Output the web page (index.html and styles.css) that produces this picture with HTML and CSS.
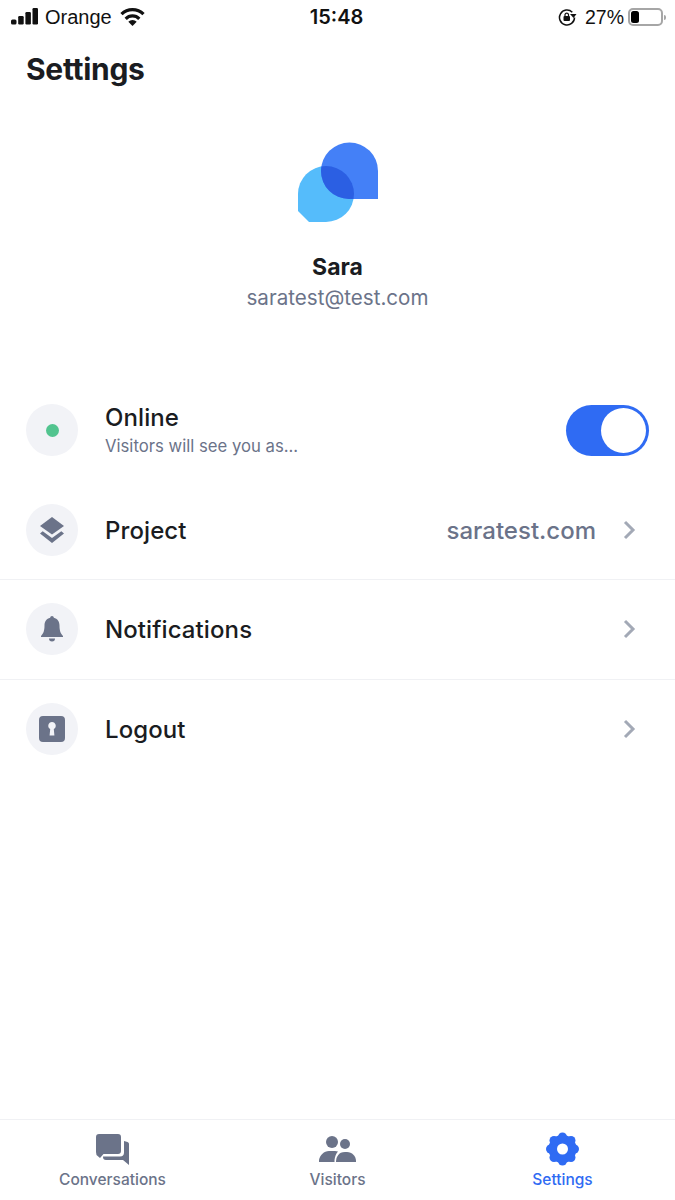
FILE: index.html
```html
<!DOCTYPE html>
<html lang="en">
<head>
<meta charset="utf-8">
<title>Settings</title>
<link rel="stylesheet" href="styles.css">
</head>
<body>
<div class="app">
  <header class="status">
    <div class="status-left">
      <svg class="signal" width="27" height="18" viewBox="0 0 27 18"><rect x="0" y="11.500" width="5.500" height="5" rx="1.500"/><rect x="7.200" y="8" width="5.500" height="8.500" rx="1.200"/><rect x="14.400" y="4" width="5.500" height="12.500" rx="1.200"/><rect x="21.500" y="0" width="5.500" height="16.500" rx="1.200"/></svg>
      <span class="carrier">Orange</span>
      <svg class="wifi" width="25" height="18" viewBox="0 0 25 18"><path d="M1.500 6.200A15.500 15.500 0 0 1 23.500 6.200" fill="none" stroke="#111" stroke-width="3.200"/><path d="M5.700 10.800A9.500 9.500 0 0 1 19.300 10.800" fill="none" stroke="#111" stroke-width="3.200"/><path d="M12.500 18L8.300 13.800A6 6 0 0 1 16.700 13.800z"/></svg>
    </div>
    <span class="clock">15:48</span>
    <div class="status-right">
      <svg class="lock" width="19" height="18" viewBox="0 0 19 18"><path d="M16.500 9.500a7.500 7.500 0 1 1-2.200-5.300" fill="none" stroke="#111" stroke-width="1.500"/><path d="M12 6h6.500L15.500 10z"/><rect x="5.500" y="8" width="6.500" height="5" rx="1"/><path d="M7 8V6.500a1.800 1.800 0 0 1 3.500 0V8" fill="none" stroke="#111" stroke-width="1.200"/></svg>
      <span class="pct">27%</span>
      <div class="battery"><div class="battery-fill"></div></div>
      <div class="battery-tip"></div>
    </div>
  </header>

  <h1 class="title">Settings</h1>

  <section class="profile">
    <svg class="logo" width="82" height="82" viewBox="0 0 82 82">
      <defs><clipPath id="logo-back"><path d="M2 52a28 28 0 0 1 56 0a28 28 0 0 1-28 28H13L2 69z"/></clipPath></defs>
      <path d="M2 52a28 28 0 0 1 56 0a28 28 0 0 1-28 28H13L2 69z" fill="#55bcfb"/>
      <path d="M25 29a28.500 28.500 0 0 1 57 0v28H53a28 28 0 0 1-28-28z" fill="#4480f7"/>
      <path clip-path="url(#logo-back)" d="M25 29a28.500 28.500 0 0 1 57 0v28H53a28 28 0 0 1-28-28z" fill="#2b5fe3"/>
    </svg>
    <div class="name">Sara</div>
    <div class="email">saratest@test.com</div>
  </section>

  <main class="menu">
    <div class="row row-online">
      <div class="badge"><span class="dot"></span></div>
      <div class="row-text">
        <div class="row-label">Online</div>
        <div class="row-sub">Visitors will see you as...</div>
      </div>
      <div class="toggle"><div class="knob"></div></div>
    </div>
    <div class="row row-line">
      <div class="badge">
        <svg width="24" height="26" viewBox="0 0 24 26"><path d="M12 0l12 9-12 8.500L0 9z"/><path d="M2.700 14.200L0 16.500 12 26l12-9.500-2.700-2.300L12 21z"/></svg>
      </div>
      <div class="row-label grow">Project</div>
      <div class="row-value">saratest.com</div>
      <svg class="chev" width="14" height="20" viewBox="0 0 14 20"><path d="M2 2l8 8-8 8" fill="none" stroke="#a3a9b6" stroke-width="3"/></svg>
    </div>
    <div class="row row-line row-lift">
      <div class="badge">
        <svg width="22" height="26" viewBox="1 1 22 26"><path d="M12 1c1 0 1.700.7 1.800 1.800C17.500 3.600 19.500 6.500 19.500 10.500c0 5.500 1.200 8 3.500 10.500v1H1v-1c2.300-2.500 3.500-5 3.500-10.500 0-4 2-6.900 5.700-7.700C10.300 1.700 11 1 12 1z"/><path d="M9 23.500h6a3 3 0 0 1-6 0z"/></svg>
      </div>
      <div class="row-label grow">Notifications</div>
      <svg class="chev" width="14" height="20" viewBox="0 0 14 20"><path d="M2 2l8 8-8 8" fill="none" stroke="#a3a9b6" stroke-width="3"/></svg>
    </div>
    <div class="row row-lift">
      <div class="badge">
        <svg width="26" height="26" viewBox="0 0 26 26"><path fill-rule="evenodd" d="M4 0h18a4 4 0 0 1 4 4v18a4 4 0 0 1-4 4H4a4 4 0 0 1-4-4V4a4 4 0 0 1 4-4zM13 6a3.800 3.800 0 0 0-1.800 7.100L10.600 19.500h4.800l-.6-6.400A3.800 3.800 0 0 0 13 6z"/></svg>
      </div>
      <div class="row-label grow">Logout</div>
      <svg class="chev" width="14" height="20" viewBox="0 0 14 20"><path d="M2 2l8 8-8 8" fill="none" stroke="#a3a9b6" stroke-width="3"/></svg>
    </div>
  </main>

  <nav class="tabs">
    <div class="tab">
      <svg width="33" height="34" viewBox="0 -2 33 34"><path d="M3 0H22a3 3 0 0 1 3 3v14a3 3 0 0 1-3 3H7.500L4 24 .5 21 0 18V3a3 3 0 0 1 3-3z"/><path d="M28 7l3.500 1a2 2 0 0 1 1.500 2V31l-6-5H10a3 3 0 0 1-3-3v-.5H24a4 4 0 0 0 4-4z"/></svg>
      <span>Conversations</span>
    </div>
    <div class="tab">
      <svg width="37" height="34" viewBox="0 -4 37 34"><circle cx="13" cy="6" r="6"/><circle cx="26" cy="8" r="5"/><path d="M0 26v-2c1-5 5-9 10-9h6c1 0 2 .2 3 .5-2 2-3 5-3.500 8.500V26z"/><path d="M17 26c0-5 2.500-10 9-10h2c5 0 9 4 9 9v1z"/></svg>
      <span>Visitors</span>
    </div>
    <div class="tab tab-active">
      <svg width="33" height="34" viewBox="0 -.5 33 34"><circle cx="16.500" cy="16.500" r="14"/><circle cx="16.500" cy="4.500" r="4.500"/><circle cx="25" cy="8" r="4.500"/><circle cx="28.500" cy="16.500" r="4.500"/><circle cx="25" cy="25" r="4.500"/><circle cx="16.500" cy="28.500" r="4.500"/><circle cx="8" cy="25" r="4.500"/><circle cx="4.500" cy="16.500" r="4.500"/><circle cx="8" cy="8" r="4.500"/><circle class="gear-hole" cx="16.500" cy="16.500" r="5.500"/></svg>
      <span>Settings</span>
    </div>
  </nav>
</div>
</body>
</html>
```

FILE: styles.css
```css
* { box-sizing: border-box; }
html, body { margin: 0; padding: 0; background: #fff; }
body { font-family: Inter, "Liberation Sans", sans-serif; color: #1a1c21; }
.app { width: 675px; height: 1200px; display: flex; flex-direction: column; overflow: hidden; }

.status { height: 34px; flex: none; display: grid; grid-template-columns: 1fr auto 1fr; align-items: center; padding: 0 9px 0 11px; color: #111; }
.status-left { display: flex; align-items: center; gap: 7px; }
.status-left svg { fill: #111; }
.carrier { font: 400 20px "Liberation Sans", sans-serif; }
.wifi { margin-left: 1px; }
.clock { font: 600 20px Inter, sans-serif; padding-right: 4px; }
.status-right { display: flex; align-items: center; justify-content: flex-end; }
.lock { fill: #111; margin-right: 8px; }
.pct { font: 400 19.500px "Liberation Sans", sans-serif; margin-right: 4px; }
.battery { width: 35px; height: 18px; border: 2px solid #a6a6a6; border-radius: 5px; padding: 1px; }
.battery-fill { width: 8px; height: 100%; background: #000; border-radius: 2.500px; }
.battery-tip { width: 2px; height: 5px; background: #a6a6a6; border-radius: 0 2px 2px 0; margin-left: 1px; }

.title { margin: 15px 0 0; padding: 0 26px; font-size: 30px; line-height: 40px; font-weight: 700; height: 40px; letter-spacing: -.3px; color: #1a1c21; }

.profile { display: flex; flex-direction: column; align-items: center; padding-top: 53px; }
.logo { display: block; margin-right: 1px; }
.name { margin-top: 28px; font-size: 23px; line-height: 30px; font-weight: 700; }
.email { margin-top: 2px; font-size: 20.600px; line-height: 28px; color: #6b7389; }

.menu { flex: 1; padding-top: 71px; }
.row { display: flex; align-items: center; height: 100px; padding: 0 38px 0 26px; }
.row-online { height: 94px; padding-right: 26px; margin-bottom: 3px; }
.row-line { border-bottom: 1px solid #f0f1f4; }
.row-lift { padding-bottom: 2px; }
.badge { width: 52px; height: 52px; border-radius: 50%; background: #f2f3f7; display: flex; align-items: center; justify-content: center; flex: none; margin-right: 27px; }
.badge svg { fill: #6b7389; }
.dot { width: 13px; height: 13px; border-radius: 50%; background: #52c48f; }
.row-text { flex: 1; }
.row-label { padding-top: 2px; font-size: 24px; line-height: 30px; font-weight: 500; letter-spacing: .1px; color: #1a1c21; }
.grow { flex: 1; }
.row-sub { font-size: 16.700px; line-height: 26px; color: #6b7389; }
.row-value { padding-top: 2px; font-size: 24px; font-weight: 500; color: #6b7389; margin-right: 27px; }
.chev { flex: none; }
.toggle { width: 83px; height: 51px; border-radius: 26px; background: #2f6bf3; padding: 3px; display: flex; justify-content: flex-end; }
.knob { width: 45px; height: 45px; border-radius: 50%; background: #fff; }

.tabs { flex: none; height: 81px; border-top: 1px solid #f0f1f4; display: grid; grid-template-columns: repeat(3, 1fr); }
.tab { display: flex; flex-direction: column; align-items: center; justify-content: flex-end; padding-bottom: 9px; color: #6b7389; font-size: 15.500px; line-height: 22px; font-weight: 500; gap: 3px; }
.tab svg { fill: #6b7389; }
.tab-active { color: #2f6bf3; }
.tab-active svg { fill: #2f6bf3; }
.tab-active .gear-hole { fill: #fff; }
```
